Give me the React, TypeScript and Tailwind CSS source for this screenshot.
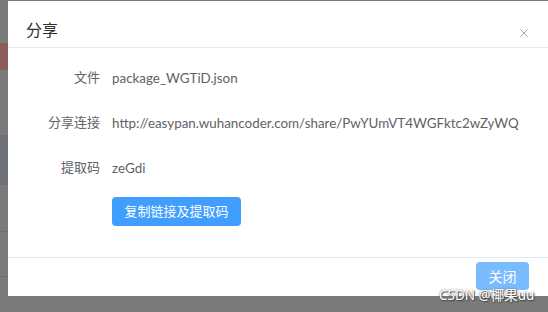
import { X } from "lucide-react"

const rows = [
  { label: "文件", value: "package_WGTiD.json" },
  { label: "分享连接", value: "http://easypan.wuhancoder.com/share/PwYUmVT4WGFktc2wZyWQ" },
  { label: "提取码", value: "zeGdi" },
]

const App = () => {
  return (
    <div className="relative w-[548px] h-[312px] overflow-hidden bg-[#7a7a7a] font-['Noto_Sans','Noto_Sans_CJK_SC',sans-serif]">
      <div className="flex h-full">
        {/* page behind the mask, only a sliver is visible */}
        <div className="w-[8px] flex flex-col shrink-0">
          <div className="h-[43px]" />
          <div className="h-[27px] bg-[#8a5e5d]" />
          <div className="h-[65px]" />
          <div className="h-[50px] bg-[#6e7278]" />
          <div className="h-[47px] border-b border-[#6c6c6c]" />
          <div className="h-[45px] border-b border-[#6c6c6c]" />
        </div>

        <div className="flex-1 mt-[1px] h-[295px] bg-white flex flex-col">
          <div className="h-[47px] border-b border-[#e4e7ed] flex items-start justify-between pl-[18px] pr-[17px] pt-[17px]">
            <span className="text-[16px] leading-[24px] text-[#303133]">分享</span>
            <X size={14} strokeWidth={1.4} className="mt-[8px] text-[#909399]" />
          </div>

          <div className="flex flex-col gap-[13px] pt-[14px] pb-[31px] border-b border-[#e4e7ed]">
            {rows.map((r) => (
              <div key={r.label} className="flex items-center h-[32px]">
                <span className="w-[92px] text-right text-[13px] text-[#606266]">{r.label}</span>
                <span className="ml-[12px] text-[13.4px] text-[#606266] whitespace-nowrap font-['Lato','Noto_Sans_CJK_SC',sans-serif]">
                  {r.value}
                </span>
              </div>
            ))}
            <div className="flex h-[29px]">
              <button className="ml-[104px] w-[129px] h-[29px] rounded-[4px] bg-[#409eff] text-white text-[13px]">
                复制链接及提取码
              </button>
            </div>
          </div>

          <div className="flex justify-end pt-[4px] pr-[19px]">
            <button className="w-[53px] h-[28px] rounded-[4px] bg-[#79bbff] text-white text-[14px]">关闭</button>
          </div>
        </div>
      </div>

      <span className="absolute left-[439px] top-[286px] text-[13.5px] leading-[18px] text-white [text-shadow:0_0_2px_#555,1px_1px_1px_#444] whitespace-nowrap">
        CSDN @椰果uu
      </span>
    </div>
  )
}

export default App
